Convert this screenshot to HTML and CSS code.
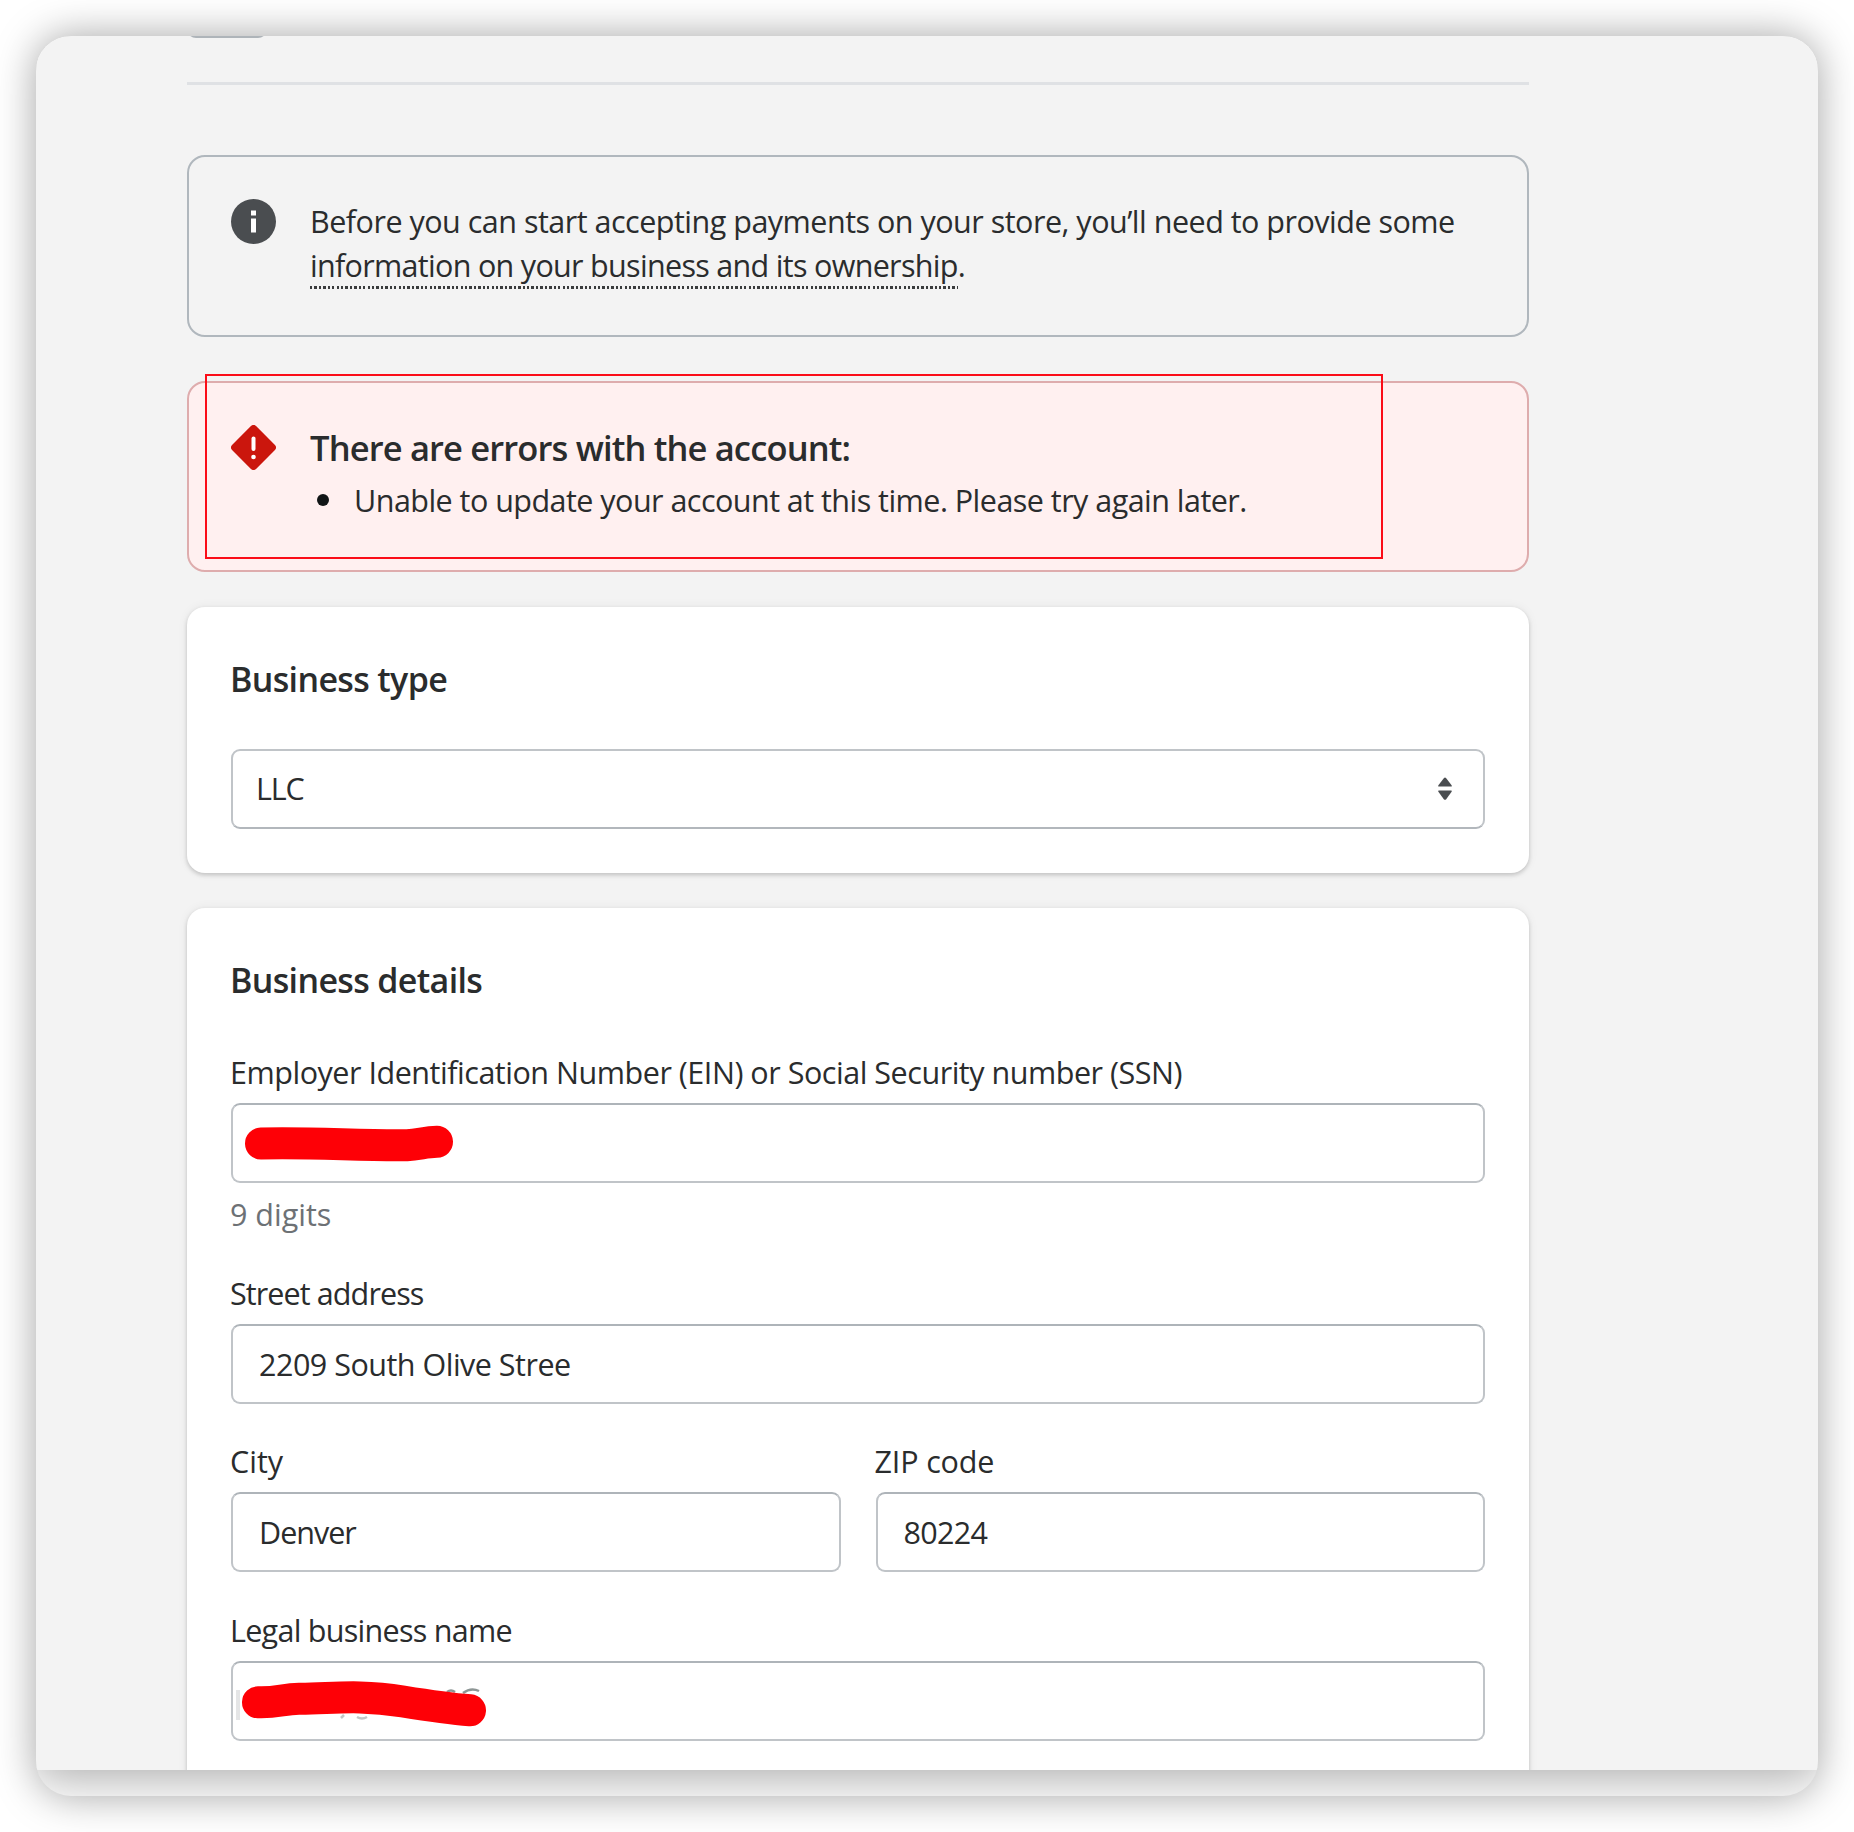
FILE: index.html
```html
<!DOCTYPE html>
<html lang="en">
<head>
  <meta charset="UTF-8" />
  <meta name="viewport" content="width=device-width, initial-scale=1.0"/>
  <title>Account setup</title>
  <link rel="stylesheet" href="styles.css">
</head>
<body>
  <div class="window">
    <main class="page">
      <div class="top-button"></div>
      <hr class="divider">

      <!-- Banners -->
      <section class="banner banner-info">
        <svg class="banner-icon" viewBox="0 0 45 45">
          <circle cx="22.5" cy="22.5" r="22.5" fill="#4a4d50"/>
          <rect x="20" y="11.5" width="5" height="5" fill="#fff"/>
          <rect x="20" y="19.5" width="5" height="14" fill="#fff"/>
        </svg>
        <p class="banner-text"><span class="line-one">Before you can start accepting payments on your store, you’ll need to provide some</span><br><a class="dotted">information on your business and its ownership</a>.</p>
      </section>

      <section class="banner banner-error">
        <svg class="banner-icon" viewBox="0 0 45 45">
          <rect x="6.5" y="6.5" width="32" height="32" rx="3" transform="rotate(45 22.5 22.5)" fill="#cb160d" stroke="#cb160d" stroke-width="2"/>
          <path d="M22.5 13.5v10.5" stroke="#fff" stroke-width="4" stroke-linecap="round"/>
          <circle cx="22.5" cy="32" r="2.3" fill="#fff"/>
        </svg>
        <div>
          <h2 class="error-title">There are errors with the account:</h2>
          <ul class="error-list">
            <li>Unable to update your account at this time. Please try again later.</li>
          </ul>
        </div>
        <div class="highlight"></div>
      </section>

      <!-- Business type -->
      <section class="card">
        <h2>Business type</h2>
        <div class="control">
          <select class="select"><option>LLC</option></select>
          <svg class="arrows" viewBox="0 0 14 24">
            <path d="M.8 9.6 Q-.2 9.4 .4 8.2 L6 .9 Q7 0 8 .9 L13.6 8.2 Q14.2 9.4 13.2 9.6z" fill="#4a4d50"/>
            <path d="M.8 13.4 Q-.2 13.6 .4 14.8 L6 22.4 Q7 23.3 8 22.4 L13.6 14.8 Q14.2 13.6 13.2 13.4z" fill="#4a4d50"/>
          </svg>
        </div>
      </section>

      <!-- Business details -->
      <section class="card card-details">
        <h2>Business details</h2>
        <div class="field">
          <label class="label-ein">Employer Identification Number (EIN) or Social Security number (SSN)</label>
          <div class="control">
            <input type="text">
            <svg class="scribble" viewBox="0 0 260 80">
              <path d="M30 40.5 C80 39 130 43 176 42.3 C188 41.8 194 39 206 38.8"/>
            </svg>
          </div>
          <p class="help">9 digits</p>
        </div>
        <div class="field">
          <label class="label-street">Street address</label>
          <div class="control"><input class="value-street" type="text" value="2209 South Olive Stree"></div>
        </div>
        <div class="row">
          <div class="field">
            <label>City</label>
            <div class="control"><input class="value-city" type="text" value="Denver"></div>
          </div>
          <div class="field">
            <label class="label-zip">ZIP code</label>
            <div class="control"><input type="text" value="80224"></div>
          </div>
        </div>
        <div class="field">
          <label class="label-legal">Legal business name</label>
          <div class="control">
            <input type="text">
            <svg class="scribble" viewBox="0 0 260 80">
              <g class="remnants">
                <path d="M7 29v30" stroke="#e4e5e6" stroke-width="4"/>
                <path d="M110 57l3-3M126 56q5 3 10 0" stroke="#c3c6c6" stroke-width="2.5"/>
                <path d="M216 31q4-3 8 0M232 32q8-6 16-2" stroke="#8d9695" stroke-width="2.5"/>
              </g>
              <path d="M27 41.3 C46 42 52 38 68 37.8 C100 38 125 33 172 40.5 C200 45 216 47.5 239 49.3"/>
            </svg>
          </div>
        </div>
      </section>
    </main>
  </div>
</body>
</html>
```

FILE: styles.css
```css
* { box-sizing: border-box; }
body { margin: 0; padding: 36px; background: #fff; font-family: 'Open Sans', 'Segoe UI', sans-serif; font-size: 30.5px; line-height: 44px; color: #2a2c2d; }
h2, p, ul { margin: 0; padding: 0; }
.window { height: 1760px; border-radius: 35px; overflow: hidden; background: #fff; box-shadow: 0 0 40px rgba(0,0,0,0.36); }
.page { display: flex; flex-direction: column; height: 1734px; padding: 0 289px 0 151px; overflow: hidden; background: #f3f3f3; box-shadow: 0 6px 46px 2px rgba(0,0,0,0.34); }

.top-button { flex: none; width: 80px; height: 12px; margin-top: -10px; border: 2px solid #aeb4b9; border-top: none; border-radius: 0 0 9px 9px; }
.divider { flex: none; width: 100%; height: 3px; margin: 44px 0 70px; border: none; background: #dfe1e4; }

.banner { position: relative; flex: none; display: flex; gap: 34px; border: 2px solid; border-radius: 18px; }
.banner-info { height: 182px; padding: 42px; border-color: #b0b7bd; }
.banner-error { height: 191px; margin-top: 44px; padding: 38px 42px; border-color: #deacad; background: #fff0f0; }
.banner-icon { flex: none; width: 45px; height: 45px; }
.banner-error .banner-icon { margin-top: 4px; }
.banner-text { white-space: nowrap; letter-spacing: -0.69px; }
.line-one { letter-spacing: -0.5px; }
.dotted { padding-bottom: 3px; background: repeating-linear-gradient(90deg, #3a3c3d 0 2.3px, transparent 2.3px 4.43px) left bottom / 100% 3px no-repeat; }
h2 { margin-left: -1px; font-size: 34px; font-weight: 600; line-height: 53px; letter-spacing: -0.65px; }
.error-list { margin-top: 4px; list-style: none; letter-spacing: -0.53px; }
.error-list li { display: flex; align-items: center; }
.error-list li::before { content: ''; width: 12px; height: 12px; margin: 0 25px 0 7px; border-radius: 50%; background: #111516; }
.error-title { margin-left: 0; font-size: 34.5px; letter-spacing: -0.85px; }
.highlight { position: absolute; top: -9px; left: 16px; width: 1178px; height: 185px; border: 2px solid #fb0d18; }

.card { flex: none; margin-top: 35px; padding: 44px; border-radius: 18px; background: #fff; box-shadow: 0 0 11px rgba(23,24,24,0.06), 0 2px 4px rgba(0,0,0,0.18); }
.card-details { height: 900px; }
.card h2 { padding-top: 2px; margin-bottom: 43px; }
.field { margin-bottom: 35.2px; }
.row { display: flex; gap: 35px; }
.row .field { flex: 1; }
label { display: block; margin: 0 0 9px -1px; white-space: nowrap; }
.label-ein { letter-spacing: -0.47px; }
.label-street { letter-spacing: -0.9px; }
.label-zip { letter-spacing: -0.15px; }
.label-legal { letter-spacing: -0.72px; }
.control { position: relative; height: 80px; }
input, .select { display: block; width: 100%; height: 80px; padding: 0 26px 1px; border: 2px solid #c0c4c8; border-top-color: #aeb4b9; border-radius: 9px; background: #fff; color: #2a2c2d; font: inherit; letter-spacing: -0.7px; appearance: none; }
.value-street { letter-spacing: -0.5px; }
.value-city { letter-spacing: -1px; }
.select { padding: 0 23px 2px; border-color: #c0c4c8; border-bottom-color: #b2b7bc; letter-spacing: -1.2px; }
.arrows { position: absolute; top: 28px; right: 33px; width: 14px; height: 24px; }
.help { margin: 9px 0 0 -1px; color: #6d7175; }
.scribble { position: absolute; top: 0; left: 0; width: 260px; height: 80px; fill: none; stroke: #fe0006; stroke-width: 32; stroke-linecap: round; }
.remnants { stroke-linecap: butt; }
```
